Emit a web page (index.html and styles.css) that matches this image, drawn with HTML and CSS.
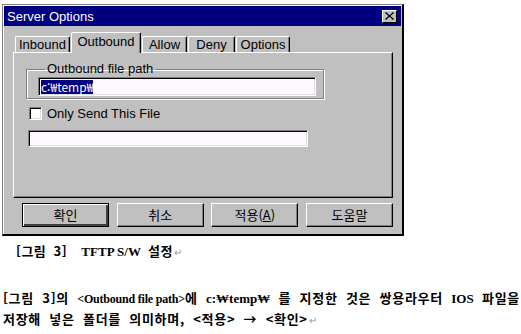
FILE: index.html
```html
<!DOCTYPE html>
<html lang="ko">
<head>
    <meta charset="UTF-8" />
    <title>Server Options</title>
    <link rel="stylesheet" href="styles.css">
</head>
<body>
    <div class="dialog">
        <div class="titlebar">
            <span class="title">Server Options</span>
            <span class="close">
                <svg width="9" height="8" viewBox="0 0 9 8">
                    <path d="M1 0 L4.5 3.2 L8 0 L9 1 L5.5 4 L9 7 L8 8 L4.5 4.8 L1 8 L0 7 L3.5 4 L0 1 Z" fill="#000" />
                </svg>
            </span>
        </div>
        <div class="dlg-body">
            <div class="tabs">
                <div class="tab w-inbound">Inbound</div>
                <div class="tab active w-outbound">Outbound</div>
                <div class="tab w-allow">Allow</div>
                <div class="tab w-deny">Deny</div>
                <div class="tab w-options">Options</div>
            </div>
            <div class="panel">
                <fieldset class="group">
                    <legend>Outbound file path</legend>
                    <div class="field field-path"><span class="sel">c:₩temp₩</span></div>
                </fieldset>
                <div class="check">
                    <span class="box"></span>
                    <span>Only Send This File</span>
                </div>
                <div class="field field-file"></div>
            </div>
            <div class="buttons">
                <div class="btn default">확인</div>
                <div class="btn">취소</div>
                <div class="btn">적용(<u>A</u>)</div>
                <div class="btn">도움말</div>
            </div>
        </div>
    </div>

    <p class="caption">[그림 3]&nbsp; <span class="roman">TFTP S/W</span> 설정<span class="ret">↵</span></p>

    <div class="para">
        <p>[그림 3]의 <span class="roman small">&lt;Outbound file path&gt;</span>에 <span class="roman">c:₩temp₩</span> 를 지정한 것은 쌍용라우터 <span class="roman">IOS</span> 파일을<span class="ret">↵</span></p>
        <p>저장해 넣은 폴더를 의미하며, &lt;적용&gt; → &lt;확인&gt;<span class="ret">↵</span></p>
    </div>
</body>
</html>
```

FILE: styles.css
```css
body {
    margin: 0;
    background-color: #ffffff;
    font-family: 'Liberation Sans', 'Noto Sans CJK KR', sans-serif;
    font-size: 12px;
    color: #000;
}

.dialog {
    width: 402px;
    margin: 4px 0 0 2px;
    padding: 1px;
    box-sizing: border-box;
    background-color: #c0c0c0;
    border-style: solid;
    border-width: 1px 2px 2px 1px;
    border-color: #808080 #000 #000 #808080;
    box-shadow: inset 1px 1px #ffffff;
}

.titlebar {
    height: 20px;
    background-color: #000080;
    color: #ffffff;
    display: flex;
    align-items: center;
    justify-content: space-between;
    padding: 0 4px 0 3px;
}

.title {
    font-size: 13px;
}

.close {
    width: 13px;
    height: 11px;
    background-color: #c0c0c0;
    border: 1px solid;
    border-color: #ffffff #000 #000 #ffffff;
    display: flex;
    align-items: center;
    justify-content: center;
}

.dlg-body {
    padding: 6px 8px 6px 9px;
}

/* tabs */
.tabs {
    display: flex;
    align-items: flex-end;
    gap: 1px;
    height: 20px;
    padding-left: 2px;
    position: relative;
    z-index: 1;
}

.tab {
    height: 16px;
    box-sizing: border-box;
    border: 1px solid;
    border-bottom: none;
    border-color: #ffffff #000 #000 #ffffff;
    border-radius: 2px 2px 0 0;
    box-shadow: inset -1px 0 #808080;
    text-align: center;
    line-height: 15px;
    font-size: 13px;
}

.tab.active {
    height: 21px;
    margin-bottom: -1px;
    background-color: #c0c0c0;
    line-height: 17px;
}

.w-inbound { width: 55px; }
.w-outbound { width: 70px; }
.w-allow { width: 45px; }
.w-deny { width: 47px; }
.w-options { width: 54px; }

.panel {
    height: 146px;
    box-sizing: border-box;
    border: 1px solid;
    border-color: #ffffff #000 #000 #ffffff;
    box-shadow: inset -1px -1px #808080;
    padding: 9px 0 0 12px;
}

.group {
    width: 298px;
    margin: 0;
    padding: 1px 7px 2px 11px;
    border: 1px solid #808080;
    box-shadow: inset 1px 1px #ffffff, 1px 1px #ffffff;
    box-sizing: border-box;
}

.group legend {
    padding: 0 2px;
    margin-left: 7px;
    font-size: 13px;
    line-height: 14px;
}

.field {
    background-color: #fdf9ff;
    border: 1px solid;
    border-color: #808080 #ffffff #ffffff #808080;
    box-shadow: inset 1px 1px #000, inset -1px -1px #dfdfdf;
    box-sizing: border-box;
}

.field-path {
    height: 19px;
    padding: 2px 0 0 2px;
}

.sel {
    background-color: #000080;
    color: #ffffff;
    font-family: 'Noto Sans CJK KR', sans-serif;
    font-size: 12px;
    line-height: 14px;
    display: inline-block;
}

.check {
    display: flex;
    align-items: center;
    gap: 5px;
    margin: 7px 0 0 3px;
    font-size: 13px;
}

.box {
    width: 13px;
    height: 13px;
    box-sizing: border-box;
    background-color: #ffffff;
    border: 1px solid;
    border-color: #808080 #ffffff #ffffff #808080;
    box-shadow: inset 1px 1px #000, inset -1px -1px #dfdfdf;
}

.field-file {
    width: 280px;
    height: 17px;
    margin: 9px 0 0 2px;
}

/* buttons */
.buttons {
    display: flex;
    justify-content: space-between;
    margin: 5px 0 0 9px;
}

.btn {
    width: 87px;
    height: 24px;
    box-sizing: border-box;
    border: 1px solid;
    border-color: #ffffff #000 #000 #ffffff;
    box-shadow: inset -1px -1px #808080;
    font-family: 'Noto Sans CJK KR', sans-serif;
    font-size: 13px;
    text-align: center;
    line-height: 21px;
}

.btn.default {
    border: 1px solid #000;
    box-shadow: inset 1px 1px #ffffff, inset -2px -2px #404040;
}

/* document text */
.caption {
    margin: 6px 0 0 16px;
    font-family: 'Noto Sans CJK KR', sans-serif;
    font-weight: bold;
    font-size: 13px;
    line-height: 18px;
    letter-spacing: 0.5px;
    word-spacing: 3px;
}

.roman {
    font-family: 'Liberation Serif', serif;
    font-weight: bold;
    font-size: 13px;
    letter-spacing: 0;
    word-spacing: 0;
}

.small {
    font-size: 12px;
    letter-spacing: -0.2px;
}

.ret {
    color: #9a9a9a;
    font-weight: normal;
    font-size: 10px;
    margin-left: 1px;
}

.para {
    margin-top: 27px;
    padding-left: 3px;
    white-space: nowrap;
    overflow: hidden;
    font-family: 'Noto Sans CJK KR', sans-serif;
    font-weight: bold;
    font-size: 13px;
    letter-spacing: 0.7px;
    word-spacing: 4px;
}

.para p {
    margin: 0;
    line-height: 19px;
}
```
